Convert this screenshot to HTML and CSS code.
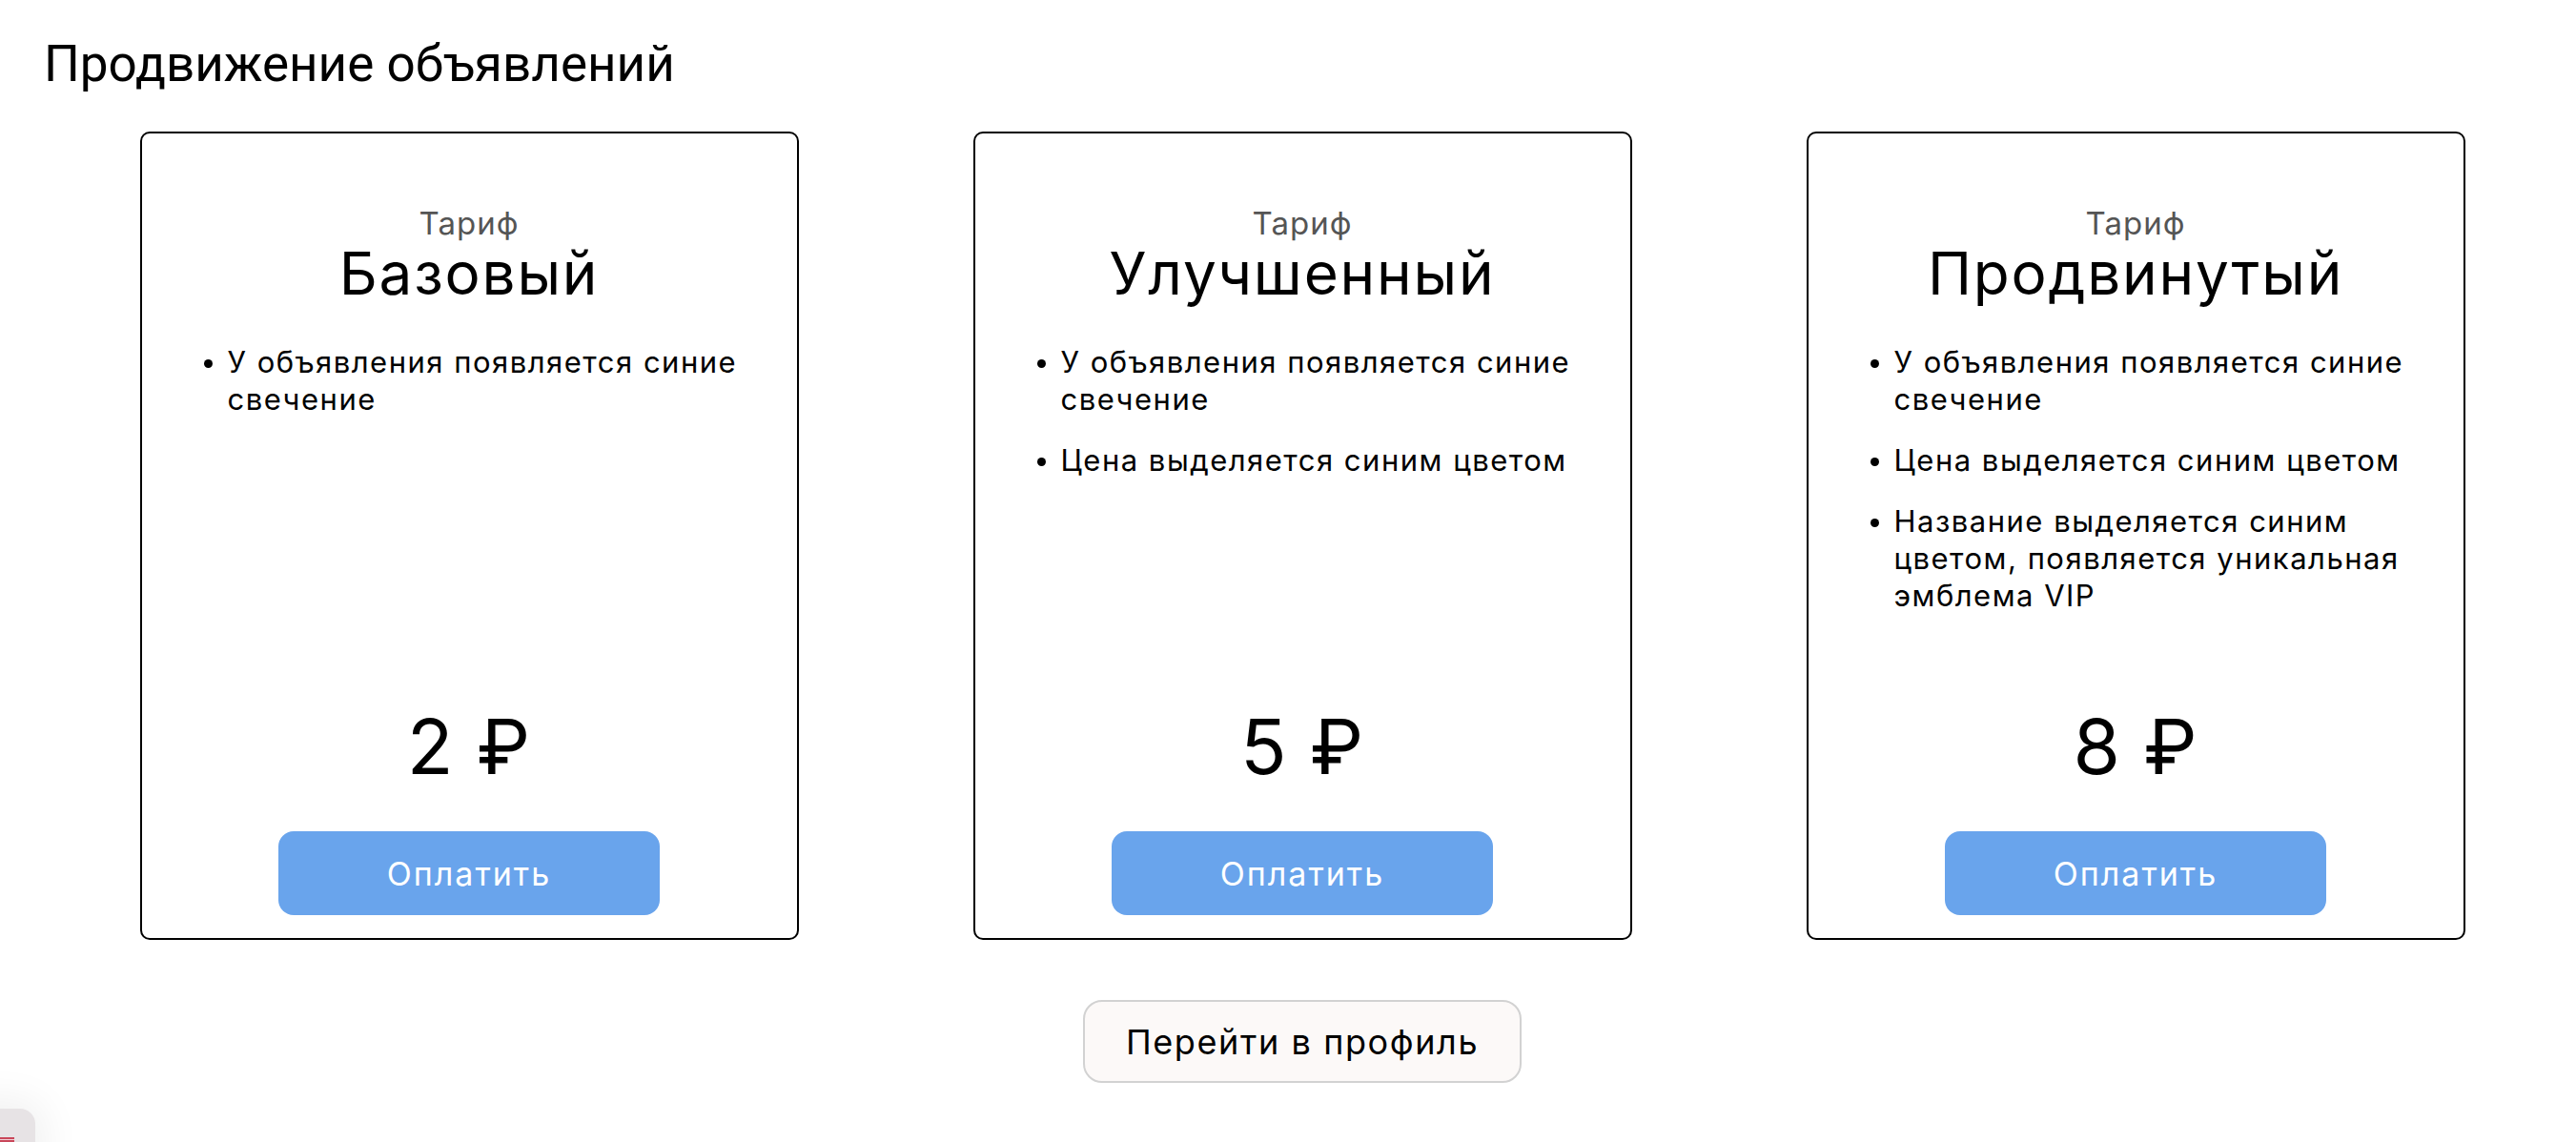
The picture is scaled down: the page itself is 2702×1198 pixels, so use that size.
FILE: index.html
```html
<!DOCTYPE html>
<html lang="ru">
<head>
<meta charset="utf-8">
<title>Продвижение объявлений</title>
<link rel="stylesheet" href="styles.css">
</head>
<body>
<main class="page">
  <h1 class="page-title">Продвижение объявлений</h1>
  <section class="plans">
    <article class="plan">
      <div class="plan-label">Тариф</div>
      <h2 class="plan-name">Базовый</h2>
      <ul class="plan-features">
        <li>У объявления появляется синие свечение</li>
      </ul>
      <div class="plan-price">2 ₽</div>
      <button class="pay-btn">Оплатить</button>
    </article>
    <article class="plan">
      <div class="plan-label">Тариф</div>
      <h2 class="plan-name">Улучшенный</h2>
      <ul class="plan-features">
        <li>У объявления появляется синие свечение</li>
        <li>Цена выделяется синим цветом</li>
      </ul>
      <div class="plan-price">5 ₽</div>
      <button class="pay-btn">Оплатить</button>
    </article>
    <article class="plan">
      <div class="plan-label">Тариф</div>
      <h2 class="plan-name">Продвинутый</h2>
      <ul class="plan-features">
        <li>У объявления появляется синие свечение</li>
        <li>Цена выделяется синим цветом</li>
        <li>Название выделяется синим цветом, появляется уникальная эмблема VIP</li>
      </ul>
      <div class="plan-price">8 ₽</div>
      <button class="pay-btn">Оплатить</button>
    </article>
  </section>
  <div class="profile-row">
    <button class="profile-btn">Перейти в профиль</button>
  </div>
</main>
<div class="corner-widget"><span class="corner-stripes"></span></div>
</body>
</html>
```
FILE: styles.css
```css
html, body {
  margin: 0;
  padding: 0;
  background: #ffffff;
}

body {
  font-family: Inter, "Noto Sans", sans-serif;
  color: #000;
  overflow: hidden;
  height: 1198px;
}

.page {
  padding: 35px 0 0 0;
}

.page-title {
  margin: 0;
  padding-left: 46px;
  font-family: Roboto, "Noto Sans", sans-serif;
  font-weight: 400;
  font-size: 53px;
  line-height: 64px;
  color: #000;
}

.plans {
  display: flex;
  justify-content: center;
  gap: 183px;
  padding-left: 30px;
  margin-top: 39px;
}

.plan {
  box-sizing: border-box;
  width: 691px;
  height: 848px;
  border: 2px solid #000;
  border-radius: 10px;
  display: flex;
  flex-direction: column;
  align-items: center;
  padding: 74px 0 24px;
}

.plan-label {
  font-size: 33px;
  line-height: 40px;
  color: #555;
  letter-spacing: 1px;
}

.plan-name {
  margin: -2px 0 0;
  font-size: 62px;
  line-height: 70px;
  font-weight: 400;
  letter-spacing: 1.8px;
}

.plan-features {
  align-self: stretch;
  margin: 38px 0 0;
  padding: 0 20px 0 90px;
  font-size: 31px;
  line-height: 39px;
  letter-spacing: 1.5px;
}

.plan-features li {
  margin-bottom: 25px;
}

.plan-features li::marker {
  font-size: 28px;
}

.plan-price {
  margin-top: auto;
  font-size: 80px;
  line-height: 96px;
  letter-spacing: 1px;
}

.pay-btn {
  margin-top: 41px;
  width: 400px;
  height: 88px;
  border: none;
  border-radius: 16px;
  background: #69a4ec;
  color: #fff;
  font-family: Inter, "Noto Sans", sans-serif;
  font-size: 34px;
  letter-spacing: 2px;
}

.profile-row {
  display: flex;
  justify-content: center;
  padding-left: 30px;
  margin-top: 63px;
}

.profile-btn {
  box-sizing: border-box;
  width: 460px;
  height: 87px;
  border: 2px solid #d2d2d2;
  border-radius: 20px;
  background: #fcf9f8;
  color: #000;
  font-family: Inter, "Noto Sans", sans-serif;
  font-size: 36px;
  letter-spacing: 1.6px;
}

.corner-widget {
  position: fixed;
  left: -60px;
  top: 1163px;
  width: 97px;
  height: 80px;
  border-radius: 16px;
  background: #e7e3e5;
  box-shadow: 0 0 40px 10px rgba(0, 0, 0, 0.06);
}

.corner-stripes {
  position: absolute;
  left: 60px;
  top: 30px;
  width: 15px;
  height: 6px;
  background: repeating-linear-gradient(to bottom, #c9475a 0 2px, #f0d0d5 2px 3px);
}
```
